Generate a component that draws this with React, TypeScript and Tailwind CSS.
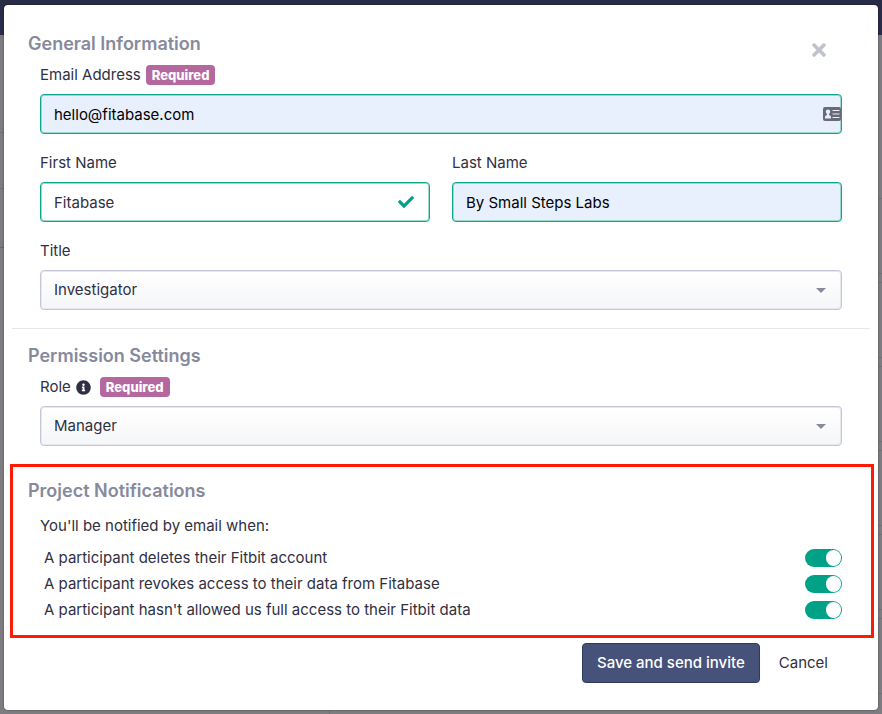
import { useState } from "react";
import { FaCheck, FaInfoCircle, FaTimes } from "react-icons/fa";

const notifications = [
  { id: "deleted", label: "A participant deletes their Fitbit account" },
  { id: "revoked", label: "A participant revokes access to their data from Fitabase" },
  { id: "partial", label: "A participant hasn't allowed us full access to their Fitbit data" },
];

const labelClass = "flex h-[22px] items-center mb-2";
const inputClass =
  "block w-full h-10 px-[13px] rounded border border-[#10a68c] shadow-[inset_0_0_0_1px_#9bd8cc] outline-none";
const autofilled = "bg-[#e8f0fe] text-black";

function Required() {
  return (
    <span className="h-5 px-[6px] rounded bg-[#b5689f] text-white text-[13px] leading-5 font-extrabold">
      Required
    </span>
  );
}

function SectionTitle({ children }: { children: React.ReactNode }) {
  return <h2 className="text-lg leading-6 font-semibold text-[#868a9c]">{children}</h2>;
}

function Select({ id, options }: { id: string; options: string[] }) {
  return (
    <div className="relative">
      <select
        id={id}
        className="block w-full h-10 px-[13px] appearance-none rounded border border-[#c3c6d6] bg-linear-to-b from-white to-[#f5f6f8] shadow-[inset_0_0_0_1px_#e6e8ee] outline-none"
      >
        {options.map((option) => (
          <option key={option}>{option}</option>
        ))}
      </select>
      <svg
        className="absolute right-4 top-[18px] pointer-events-none"
        width="10"
        height="5"
        viewBox="0 0 10 5"
        fill="#868a9c"
      >
        <path d="M0 0h10L5 5z" />
      </svg>
    </div>
  );
}

function ContactCardIcon() {
  return (
    <svg width="18" height="14" viewBox="0 0 18 14">
      <rect width="18" height="14" rx="2" fill="#676b75" />
      <circle cx="5" cy="4.800" r="2.200" fill="#e8f0fe" />
      <path d="M2 11.500V10Q2 8.300 4 8V6h2v2q2 .3 2 2v1.500z" fill="#e8f0fe" />
      <path d="M9.500 3.500h7M9.500 7h7M9.500 10.500h7" stroke="#e8f0fe" strokeWidth="1.200" />
    </svg>
  );
}

// Dimmed project page that shows around the edges of the dialog
function Backdrop() {
  return (
    <div aria-hidden="true" className="absolute inset-0 flex flex-col overflow-hidden bg-[#7d7c81]">
      <div className="h-[35px] shrink-0 bg-[#292c46]" />
      <div className="flex grow">
        <div className="w-[330px] border-r border-[#717076]">
          <div className="h-[98px] border-b border-[#717076]" />
          <div className="h-14 border-b border-[#717076]" />
          <div className="h-[59px] border-b border-[#68676d]" />
        </div>
        <div className="flex grow flex-col gap-2 pt-[163px]">
          {[1, 2, 3, 4, 5, 6].map((row) => (
            <div key={row} className="h-[76px] shrink-0 border-y border-[#717076]" />
          ))}
        </div>
      </div>
    </div>
  );
}

export default function App() {
  const [enabled, setEnabled] = useState<Record<string, boolean>>({
    deleted: true,
    revoked: true,
    partial: true,
  });

  const toggle = (id: string) => {
    setEnabled((prev) => ({ ...prev, [id]: !prev[id] }));
  };

  return (
    <div className="relative min-h-screen px-1 pt-[5px] pb-1 font-['Inter',sans-serif] text-[15px] text-[#2f3042]">
      <Backdrop />
      <form
        role="dialog"
        aria-label="Invite user"
        onSubmit={(e) => e.preventDefault()}
        className="relative bg-white rounded shadow-[0_0_2px_#00000080] pt-[27px] pb-[27px]"
      >
        <button
          type="button"
          aria-label="Close"
          className="absolute right-[49px] top-[35px] text-xl text-[#c0c3ca]"
        >
          <FaTimes />
        </button>

        {/* General Information */}
        <section className="px-6">
          <SectionTitle>General Information</SectionTitle>
          <div className="px-3 mt-2 flex flex-col gap-[18px]">
            <div>
              <div className={labelClass}>
                <label htmlFor="email" className="mr-[5px]">Email Address</label>
                <Required />
              </div>
              <div className="relative">
                <input
                  id="email"
                  type="email"
                  defaultValue="hello@fitabase.com"
                  className={`${inputClass} ${autofilled}`}
                />
                <div className="absolute right-px top-[13px]">
                  <ContactCardIcon />
                </div>
              </div>
            </div>
            <div className="grid grid-cols-2 gap-[22px]">
              <div>
                <label htmlFor="first" className={labelClass}>First Name</label>
                <div className="relative">
                  <input id="first" defaultValue="Fitabase" className={`${inputClass} bg-white`} />
                  <FaCheck className="absolute right-4 top-3 text-base text-[#00a287]" />
                </div>
              </div>
              <div>
                <label htmlFor="last" className={labelClass}>Last Name</label>
                <input
                  id="last"
                  defaultValue="By Small Steps Labs"
                  className={`${inputClass} ${autofilled}`}
                />
              </div>
            </div>
            <div>
              <label htmlFor="title" className={labelClass}>Title</label>
              <Select id="title" options={["Investigator", "Coordinator"]} />
            </div>
          </div>
        </section>

        <hr className="mx-2 mt-[18px] mb-[15px] border-[#e6e7eb]" />

        {/* Permission Settings */}
        <section className="px-6">
          <SectionTitle>Permission Settings</SectionTitle>
          <div className="px-3 mt-2">
            <div className={labelClass}>
              <label htmlFor="role">Role</label>
              <FaInfoCircle className="ml-[5px] mr-[9px]" />
              <Required />
            </div>
            <Select id="role" options={["Manager", "Viewer"]} />
          </div>
        </section>

        {/* Project Notifications */}
        <section className="ml-[6px] mr-1 mt-[18px] border-3 border-[#fc1c03] pl-[15px] pr-[17px] py-3">
          <SectionTitle>Project Notifications</SectionTitle>
          <div className="px-3 mt-3">
            <p className="leading-[22px] mb-2">You'll be notified by email when:</p>
            {notifications.map((item) => (
              <div key={item.id} className="flex h-[26px] items-center justify-between pl-1">
                <label htmlFor={item.id}>{item.label}</label>
                <input
                  id={item.id}
                  type="checkbox"
                  checked={enabled[item.id]}
                  onChange={() => toggle(item.id)}
                  className="flex h-[18px] w-[37px] appearance-none items-center rounded-full bg-[#b9bcc8] p-px before:h-4 before:w-[15px] before:rounded-full before:bg-white checked:justify-end checked:bg-[#00a287]"
                />
              </div>
            ))}
          </div>
        </section>

        <div className="flex justify-end gap-[19px] mt-[5px] pr-[50px]">
          <button
            type="submit"
            className="h-10 px-[14px] rounded border border-[#2e3a5e] bg-[#46527a] text-white font-medium"
          >
            Save and send invite
          </button>
          <button type="button">Cancel</button>
        </div>
      </form>
    </div>
  );
}
